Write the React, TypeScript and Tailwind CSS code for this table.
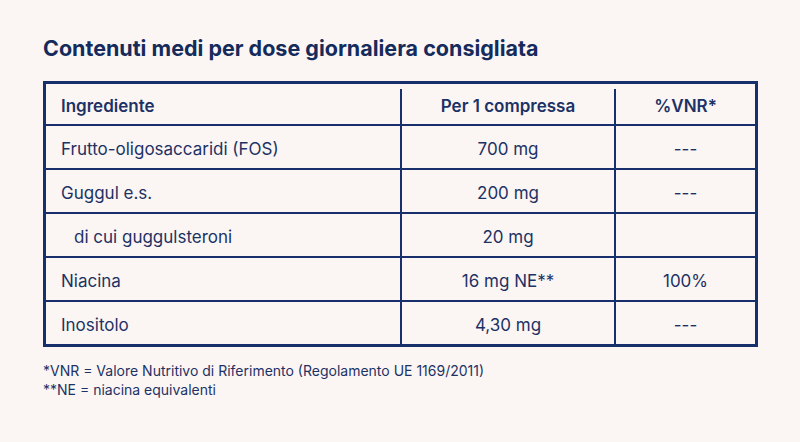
import React from 'react';

const ROWS = [
  { name: 'Frutto-oligosaccaridi (FOS)', dose: '700 mg', vnr: '---' },
  { name: 'Guggul e.s.', dose: '200 mg', vnr: '---' },
  { name: 'di cui guggulsteroni', dose: '20 mg', vnr: '', sub: true },
  { name: 'Niacina', dose: '16 mg NE**', vnr: '100%' },
  { name: 'Inositolo', dose: '4,30 mg', vnr: '---' },
];

const App: React.FC = () => {
  return (
    <div
      className="min-h-[442px] w-[800px] bg-[#fbf6f4] px-[43px] pt-[34px] text-[#1d3264]"
      style={{ fontFamily: 'Inter, "Noto Sans", sans-serif' }}
    >
      <h2 className="mb-[19px] text-[21.5px] leading-[28px] font-bold text-[#142b5c]">
        Contenuti medi per dose giornaliera consigliata
      </h2>

      <div className="w-[715px] border-[3px] border-[#17306b]">
        <div className="flex h-[40px] pt-[5px] text-[17px] font-semibold">
          <div className="flex w-[354px] items-center pl-[15px]">Ingrediente</div>
          <div className="flex w-[214px] items-center justify-center border-l-2 border-[#17306b]">Per 1 compressa</div>
          <div className="flex w-[141px] items-center justify-center border-l-2 border-[#17306b]">%VNR*</div>
        </div>

        {ROWS.map((row, i) => (
          <div key={i} className="flex h-[44px] border-t-2 border-[#17306b] text-[17px]">
            <div className={`flex w-[354px] items-center pt-[5px] ${row.sub ? 'pl-[28px]' : 'pl-[15px]'}`}>{row.name}</div>
            <div className="flex w-[214px] items-center justify-center border-l-2 border-[#17306b] pt-[5px]">{row.dose}</div>
            <div className="flex w-[141px] items-center justify-center border-l-2 border-[#17306b] pt-[5px]">{row.vnr}</div>
          </div>
        ))}
      </div>

      <div className="mt-[14px] text-[14px] leading-[19px]">
        <p>*VNR = Valore Nutritivo di Riferimento (Regolamento UE 1169/2011)</p>
        <p>**NE = niacina equivalenti</p>
      </div>
    </div>
  );
};

export default App;
